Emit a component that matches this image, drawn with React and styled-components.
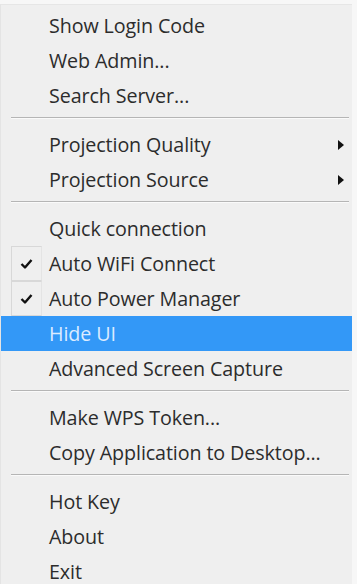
import styled, { createGlobalStyle } from 'styled-components'

const Global = createGlobalStyle`
  html, body {
    margin: 0;
    padding: 0;
    background: #f7f7f7;
  }
  #root {
    width: 357px;
    height: 584px;
    overflow: hidden;
  }
`

const Menu = styled.div`
  margin: 4px 5px 0 0;
  background: #efefef;
  border-left: 1px solid #e4e4e4;
  border-top: 1px solid #e6e6e6;
  padding: 3px 0 0 0;
  height: 600px;
  font-family: "Open Sans", "Noto Sans", sans-serif;
  font-size: 19.7px;
  color: #2c2c2c;
`

const Row = styled.div`
  position: relative;
  height: 35px;
  display: flex;
  align-items: center;
  padding-left: 48px;
  padding-right: 10px;
  background: ${(p) => (p.$active ? '#3398f7' : 'transparent')};
  color: ${(p) => (p.$active ? '#dcebff' : '#2c2c2c')};
`

const Label = styled.span`
  flex: 1;
  white-space: nowrap;
  letter-spacing: -0.1px;
`

const CheckBox = styled.span`
  position: absolute;
  left: 10px;
  top: 0;
  width: 31px;
  height: 35px;
  border: 1px solid #d8d8d8;
  border-right-color: #e4e4e4;
  box-sizing: border-box;
  display: flex;
  align-items: center;
  justify-content: center;
`

const Arrow = styled.span`
  width: 0;
  height: 0;
  border-top: 5px solid transparent;
  border-bottom: 5px solid transparent;
  border-left: 6px solid #111;
  margin-right: -2px;
`

const Sep = styled.div`
  height: 14px;
  display: flex;
  align-items: flex-start;
  padding: 4px 3px 0 10px;
  box-sizing: border-box;

  &::after {
    content: '';
    flex: 1;
    height: 1px;
    background: #b5b5b5;
    box-shadow: 0 1px 0 #fafafa;
  }
`

const Check = () => (
  <svg width="13" height="12" viewBox="0 0 13 12">
    <path d="M1.5 6 L5 9.5 L11.5 2" fill="none" stroke="#111" strokeWidth="2.4" strokeLinejoin="round" />
  </svg>
)

const groups = [
  [{ t: 'Show Login Code' }, { t: 'Web Admin...' }, { t: 'Search Server...' }],
  [{ t: 'Projection Quality', sub: true }, { t: 'Projection Source', sub: true }],
  [
    { t: 'Quick connection' },
    { t: 'Auto WiFi Connect', check: true },
    { t: 'Auto Power Manager', check: true },
    { t: 'Hide UI', active: true },
    { t: 'Advanced Screen Capture' },
  ],
  [{ t: 'Make WPS Token...' }, { t: 'Copy Application to Desktop...' }],
  [{ t: 'Hot Key' }, { t: 'About' }, { t: 'Exit' }],
]

export default function App() {
  return (
    <>
      <Global />
      <Menu>
        {groups.map((g, gi) => (
          <div key={gi}>
            {gi > 0 && <Sep />}
            {g.map((it) => (
              <Row key={it.t} $active={it.active}>
                {it.check && (
                  <CheckBox>
                    <Check />
                  </CheckBox>
                )}
                <Label>{it.t}</Label>
                {it.sub && <Arrow />}
              </Row>
            ))}
          </div>
        ))}
      </Menu>
    </>
  )
}
